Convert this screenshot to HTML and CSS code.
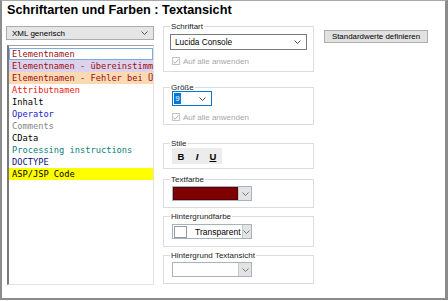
FILE: index.html
```html
<!DOCTYPE html>
<html lang="de">
  <head>
    <meta charset="UTF-8">
    <meta name="viewport" content="width=device-width, initial-scale=1.0">
    <title>Schriftarten und Farben</title>
    <link rel="stylesheet" href="styles.css">
  </head>
  <body>
    <div class="dialog">
      <h1 class="title">Schriftarten und Farben : Textansicht</h1>

      <div class="content">
        <!-- linke Spalte: Typ + Liste -->
        <div class="col-left">
          <div class="select select-grey">
            <span>XML generisch</span>
            <svg class="chev" width="7" height="4" viewBox="0 0 7 4"><polyline points="0.5,0.5 3.5,3.5 6.5,0.5" fill="none" stroke="#555" stroke-width="1"/></svg>
          </div>
          <ul class="entries">
            <li class="e-name focused">Elementnamen</li>
            <li class="e-name bg-lav">Elementnamen - übereinstimm</li>
            <li class="e-name bg-peach">Elementnamen - Fehler bei Ü</li>
            <li class="e-attr">Attributnamen</li>
            <li class="e-text">Inhalt</li>
            <li class="e-op">Operator</li>
            <li class="e-comm">Comments</li>
            <li class="e-text">CData</li>
            <li class="e-pi">Processing instructions</li>
            <li class="e-doc">DOCTYPE</li>
            <li class="e-text bg-yellow">ASP/JSP Code</li>
          </ul>
        </div>

        <!-- mittlere Spalte: Gruppen -->
        <div class="col-mid">
          <div class="group g-font">
            <div class="group-label">Schriftart</div>
            <div class="select select-font">
              <span>Lucida Console</span>
              <svg class="chev" width="7" height="4" viewBox="0 0 7 4"><polyline points="0.5,0.5 3.5,3.5 6.5,0.5" fill="none" stroke="#555" stroke-width="1"/></svg>
            </div>
            <div class="check-row r-font">
              <span class="checkbox">
                <svg width="6" height="5" viewBox="0 0 6 5"><polyline points="0.5,2.5 2.2,4.2 5.5,0.5" fill="none" stroke="#aaa" stroke-width="1"/></svg>
              </span>
              <span>Auf alle anwenden</span>
            </div>
          </div>

          <div class="group g-size">
            <div class="group-label">Größe</div>
            <div class="select select-size">
              <span class="sel-num">9</span>
              <svg class="chev" width="7" height="4" viewBox="0 0 7 4"><polyline points="0.5,0.5 3.5,3.5 6.5,0.5" fill="none" stroke="#444" stroke-width="1"/></svg>
            </div>
            <div class="check-row r-size">
              <span class="checkbox">
                <svg width="6" height="5" viewBox="0 0 6 5"><polyline points="0.5,2.5 2.2,4.2 5.5,0.5" fill="none" stroke="#aaa" stroke-width="1"/></svg>
              </span>
              <span>Auf alle anwenden</span>
            </div>
          </div>

          <div class="group g-style">
            <div class="group-label">Stile</div>
            <div class="styles">
              <span class="st-b">B</span>
              <span class="st-i">I</span>
              <span class="st-u">U</span>
            </div>
          </div>

          <div class="group g-fg">
            <div class="group-label">Textfarbe</div>
            <div class="color-combo">
              <div class="swatch swatch-red"></div>
              <div class="combo-btn">
                <svg width="7" height="4" viewBox="0 0 7 4"><polyline points="0.5,0.5 3.5,3.5 6.5,0.5" fill="none" stroke="#777" stroke-width="1"/></svg>
              </div>
            </div>
          </div>

          <div class="group g-bg">
            <div class="group-label">Hintergrundfarbe</div>
            <div class="color-combo">
              <div class="swatch swatch-none">
                <span class="mini"></span>
                <span class="transp">Transparent</span>
              </div>
              <div class="combo-btn">
                <svg width="7" height="4" viewBox="0 0 7 4"><polyline points="0.5,0.5 3.5,3.5 6.5,0.5" fill="none" stroke="#777" stroke-width="1"/></svg>
              </div>
            </div>
          </div>

          <div class="group g-view">
            <div class="group-label">Hintergrund Textansicht</div>
            <div class="color-combo">
              <div class="swatch"></div>
              <div class="combo-btn">
                <svg width="7" height="4" viewBox="0 0 7 4"><polyline points="0.5,0.5 3.5,3.5 6.5,0.5" fill="none" stroke="#777" stroke-width="1"/></svg>
              </div>
            </div>
          </div>
        </div>

        <!-- rechte Spalte -->
        <div class="col-right">
          <button class="btn">Standardwerte definieren</button>
        </div>
      </div>
    </div>
  </body>
</html>
```

FILE: styles.css
```css
/* Dialog "Schriftarten und Farben" */

body {
  margin: 0;
  background: #fff;
  font-family: "Liberation Sans", Arial, sans-serif;
  font-size: 8px;
  color: #000;
}

.dialog {
  box-sizing: border-box;
  width: 448px;
  height: 300px;
  border: 2px solid #8c8c8c;
  border-top: 1px solid #a8a8a8;
  border-right-width: 3px;
  background: #fff;
}

.title {
  margin: 0;
  padding-left: 5px;
  height: 19px;
  line-height: 19px;
  font-size: 12.7px;
  font-weight: bold;
}

.content {
  display: flex;
}

/* left */
.col-left {
  width: 148px;
  margin-left: 4px;
}

.select {
  box-sizing: border-box;
  display: flex;
  align-items: center;
  justify-content: space-between;
  border: 1px solid #acacac;
  padding: 0 5px 0 5px;
}

.select-grey {
  margin-top: 6px;
  height: 14px;
  background: #e5e5e5;
}

.entries {
  box-sizing: border-box;
  list-style: none;
  margin: 5px 0 0 1px;
  padding: 2px 0 0 0;
  height: 240px;
  border: 1px solid #e2e2e2;
  border-left: 2px solid #7a7a7a;
  border-top-color: #a0a0a0;
  font-family: "DejaVu Sans Mono", "Liberation Mono", monospace;
  font-size: 8.7px;
}

.entries li {
  box-sizing: border-box;
  height: 12px;
  line-height: 12px;
  padding-left: 3px;
  white-space: nowrap;
  overflow: hidden;
}

.entries li.focused {
  border: 1px solid #7eaadb;
  line-height: 10px;
  padding-left: 2px;
}

.e-name { color: #9b0f0f; }
.e-attr { color: #f01818; }
.e-text { color: #000; }
.e-op { color: #1c1cd0; }
.e-comm { color: #888; }
.e-pi { color: #0e8080; }
.e-doc { color: #10107a; }

.bg-lav { background: #dbd3ee; }
.bg-peach { background: #fbdab3; }
.bg-yellow { background: #ffff00; }

/* middle */
.col-mid {
  width: 151px;
  margin-left: 9px;
}

.group {
  box-sizing: border-box;
  border: 1px solid #dcdcdc;
  padding: 0 6px;
}

.group-label {
  width: fit-content;
  margin-top: -5px;
  height: 10px;
  line-height: 10px;
  padding: 0 1px;
  background: #fff;
  color: #222;
}

.g-font { margin-top: 6px; padding-bottom: 3px; }
.g-size { margin-top: 15px; }
.g-style { margin-top: 18px; padding-bottom: 4px; }
.g-fg { margin-top: 10px; padding-bottom: 6px; }
.g-bg { margin-top: 8px; padding-bottom: 7px; }
.g-view { margin-top: 8px; padding-bottom: 6px; }

.select-font {
  margin-top: 2px;
  width: 137px;
  height: 16px;
  border-color: #7a7a7a;
  padding-left: 4px;
  padding-right: 5px;
  font-size: 8.3px;
}

.select-size {
  margin: -2px 0 0 2px;
  width: 40px;
  height: 15px;
  border-color: #0078d7;
  padding-left: 1px;
  padding-right: 5px;
}

.sel-num {
  display: inline-block;
  width: 7px;
  height: 11px;
  line-height: 11px;
  background: #0078d7;
  color: #fff;
  text-align: center;
}

.check-row {
  display: flex;
  align-items: center;
  gap: 3px;
  height: 14px;
  margin-left: 2px;
  color: #a6a6a6;
}

.r-font { margin-top: 4px; }
.r-size { margin-top: 4px; }

.checkbox {
  box-sizing: border-box;
  display: flex;
  align-items: center;
  justify-content: center;
  width: 8px;
  height: 8px;
  border: 1px solid #c4c4c4;
}

.styles {
  display: flex;
  align-items: center;
  justify-content: space-around;
  margin: -1px 0 0 2px;
  width: 50px;
  height: 16px;
  background: #ececec;
  font-size: 9.5px;
  font-weight: bold;
}

.st-i { font-style: italic; }
.st-u { text-decoration: underline; }

.color-combo {
  box-sizing: border-box;
  display: flex;
  margin: 1px 0 0 2px;
  width: 80px;
  height: 15px;
  border: 1px solid #a7b2c0;
}

.g-bg .color-combo { margin-top: 2px; }

.swatch {
  flex: 1;
  border: 1px solid #fff;
  background: #fff;
}

.swatch-red {
  background: #800000;
  border-color: #5a0000;
}

.swatch-none {
  display: flex;
  align-items: center;
}

.mini {
  box-sizing: border-box;
  width: 13px;
  height: 12px;
  border: 1px solid #9a9a9a;
  background: #fff;
}

.transp {
  margin-left: 8px;
  font-size: 8.5px;
}

.combo-btn {
  box-sizing: border-box;
  display: flex;
  align-items: center;
  justify-content: center;
  width: 13px;
  background: #e3e3e3;
  border-left: 1px solid #c8c8c8;
}

/* right */
.col-right {
  margin-left: 10px;
}

.btn {
  margin-top: 10px;
  width: 104px;
  height: 13px;
  padding: 0;
  background: #e1e1e1;
  border: 1px solid #adadad;
  font-family: "Liberation Sans", Arial, sans-serif;
  font-size: 7.9px;
  line-height: 11px;
  color: #000;
}
```
